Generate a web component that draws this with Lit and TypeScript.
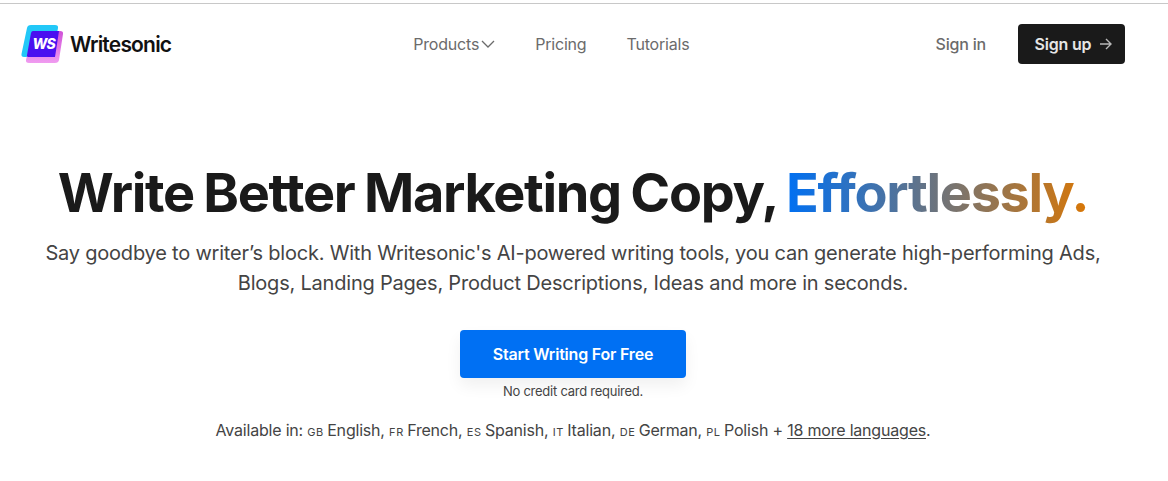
import { LitElement, html, css } from "lit";
import { customElement } from "lit/decorators.js";

@customElement("app-root")
export class AppRoot extends LitElement {
  static styles = css`
    :host {
      display: block;
      height: 481px;
      overflow: hidden;
      background: #fff;
      font-family: Inter, "Liberation Sans", sans-serif;
      font-feature-settings: "calt" 0;
      color: #1a1a1a;
    }
    .chrome {
      height: 3px;
      background: #fff;
      border-bottom: 1px solid #c8c8c8;
    }
    .nav {
      display: flex;
      align-items: center;
      height: 80px;
      padding: 0 43px 0 21px;
    }
    .logo {
      display: flex;
      align-items: center;
      gap: 6px;
      color: #111;
      font-weight: 600;
      font-size: 21px;
      letter-spacing: -0.8px;
    }
    .links {
      display: flex;
      align-items: center;
      gap: 40px;
      margin-left: 242px;
      font-size: 16px;
      letter-spacing: -0.2px;
      color: #6b6b6b;
    }
    .products {
      display: flex;
      align-items: center;
      gap: 2px;
    }
    .right {
      margin-left: auto;
      display: flex;
      align-items: center;
      gap: 32px;
    }
    .signin {
      font-size: 16px;
      font-weight: 500;
      letter-spacing: -0.2px;
      color: #6b6b6b;
    }
    .signup {
      display: flex;
      align-items: center;
      justify-content: center;
      gap: 8px;
      box-sizing: border-box;
      width: 107px;
      height: 40px;
      padding-left: 4px;
      border-radius: 4px;
      background: #1a1a1a;
      color: #e6e6e6;
      font-size: 16px;
      font-weight: 600;
      letter-spacing: -0.2px;
    }
    .hero {
      width: 1146px;
      display: flex;
      flex-direction: column;
      align-items: center;
      text-align: center;
    }
    h1 {
      margin: 73px 0 0;
      font-size: 54px;
      line-height: 72px;
      font-weight: 700;
      letter-spacing: -1.33px;
      word-spacing: -2px;
      white-space: nowrap;
    }
    .grad {
      background: linear-gradient(90deg, #0070f3, #d97706);
      -webkit-background-clip: text;
      background-clip: text;
      color: transparent;
    }
    .sub {
      margin: 9px 0 0;
      width: 1080px;
      font-size: 20px;
      line-height: 30px;
      letter-spacing: -0.21px;
      color: #444;
    }
    .cta {
      margin-top: 32px;
      display: flex;
      align-items: center;
      justify-content: center;
      width: 226px;
      height: 48px;
      border-radius: 4px;
      background: #0070f3;
      color: #fff;
      font-size: 16px;
      font-weight: 600;
      letter-spacing: -0.2px;
      box-shadow: 0 8px 16px rgba(0, 0, 0, 0.06);
    }
    .note {
      margin-top: 5px;
      font-size: 13px;
      line-height: 16px;
      letter-spacing: -0.25px;
      color: #444;
    }
    .langs {
      margin-top: 19px;
      font-size: 16px;
      line-height: 24px;
      letter-spacing: -0.2px;
      color: #444;
    }
    .flag {
      font-size: 11px;
      letter-spacing: 0.6px;
      margin-right: -1px;
    }
    .langs u {
      text-underline-offset: 2px;
    }
  `;

  render() {
    return html`
      <div class="chrome"></div>
      <div class="nav">
        <div class="logo">
          <svg width="43" height="40" viewBox="0 0 43 40">
            <defs>
              <linearGradient id="mg" x1="0" y1="0" x2="0" y2="1">
                <stop offset="0" stop-color="#d050d8" />
                <stop offset="1" stop-color="#f09cf0" />
              </linearGradient>
            </defs>
            <path d="M6 4 Q6.500 1 10 1 H34 Q37.500 1 37 4 L32 30 Q31.500 33 28 33 H3 Q0 33 0.500 30 Z" fill="#22c8f8" />
            <path d="M12 7 H39 Q42.500 7 42 10 L38 36 Q37.500 39 34 39 H8 Q4.500 39 5 36 L6 32 Z" fill="url(#mg)" />
            <path d="M12 7 H38 L34 33 H8 Q5.500 33 6 31 L10 9 Q10.500 7 12 7 Z" fill="#4a10f0" />
            <text x="11.500" y="24.500" font-family="Inter" font-size="14" font-weight="800" font-style="italic" fill="#fff">WS</text>
          </svg>
          <span>Writesonic</span>
        </div>
        <div class="links">
          <span class="products">
            Products
            <svg width="14" height="8" viewBox="0 0 14 8" fill="none" stroke="#6b6b6b" stroke-width="1.300">
              <path d="M1 1 L7 7 L13 1" />
            </svg>
          </span>
          <span>Pricing</span>
          <span>Tutorials</span>
        </div>
        <div class="right">
          <span class="signin">Sign in</span>
          <span class="signup">
            Sign up
            <svg width="13" height="12" viewBox="0 0 13 12" fill="none" stroke="#b8b8b8" stroke-width="1.400">
              <path d="M1 6 H12 M7 1 L12 6 L7 11" />
            </svg>
          </span>
        </div>
      </div>
      <div class="hero">
        <h1>Write Better Marketing Copy, <span class="grad">Effortlessly.</span></h1>
        <p class="sub">
          Say goodbye to writer’s block. With Writesonic's AI-powered writing tools, you can generate high-performing Ads,
          Blogs, Landing Pages, Product Descriptions, Ideas and more in seconds.
        </p>
        <div class="cta">Start Writing For Free</div>
        <div class="note">No credit card required.</div>
        <div class="langs">
          Available in: <span class="flag">GB</span> English, <span class="flag">FR</span> French,
          <span class="flag">ES</span> Spanish, <span class="flag">IT</span> Italian,
          <span class="flag">DE</span> German, <span class="flag">PL</span> Polish + <u>18 more languages</u>.
        </div>
      </div>
    `;
  }
}
